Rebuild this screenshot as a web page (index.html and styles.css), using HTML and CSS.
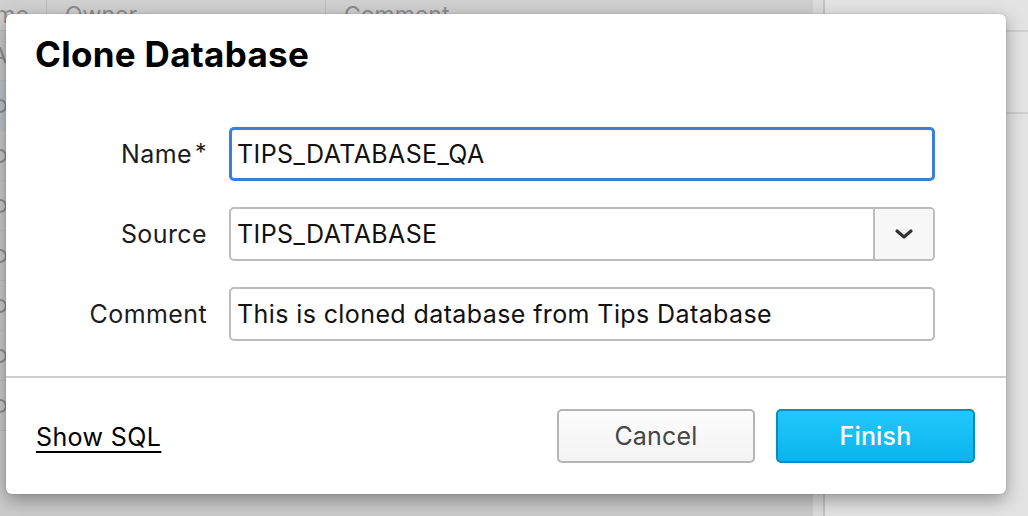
FILE: index.html
```html
<!DOCTYPE html>
<html>
<head>
<meta charset="utf-8">
<link rel="stylesheet" href="styles.css">
</head>
<body>
<div class="app">
  <div class="main">
    <div class="thead">
      <div class="th th-name">Name</div>
      <div class="th th-owner">Owner</div>
      <div class="th th-comment">Comment</div>
    </div>
    <div class="tbody">
      <div class="tr"><span class="cell">A</span></div>
      <div class="tr sel"><span class="dot"></span></div>
      <div class="tr"><span class="dot"></span></div>
      <div class="tr"><span class="dot"></span></div>
      <div class="tr"><span class="dot"></span></div>
      <div class="tr"><span class="dot"></span></div>
      <div class="tr"><span class="dot"></span></div>
      <div class="tr"><span class="dot"></span></div>
    </div>
  </div>
  <div class="splitter"></div>
  <div class="side">
    <div class="side-row"></div>
    <div class="side-row tall"></div>
  </div>
</div>

<div class="dialog">
  <h1 class="title">Clone Database</h1>
  <div class="form">
    <label class="label">Name<span class="req">*</span></label>
    <div class="field focus">TIPS_DATABASE_QA</div>

    <label class="label">Source</label>
    <div class="field select">
      <span class="select-value">TIPS_DATABASE</span>
      <span class="select-btn">
        <svg width="20" height="14" viewBox="0 0 20 14"><path d="M3 4 L10 10 L17 4" fill="none" stroke="#333" stroke-width="3.2" stroke-linecap="round" stroke-linejoin="round"/></svg>
      </span>
    </div>

    <label class="label">Comment</label>
    <div class="field">This is cloned database from Tips Database</div>
  </div>
  <div class="footer">
    <a class="link">Show SQL</a>
    <div class="buttons">
      <button class="btn cancel">Cancel</button>
      <button class="btn finish">Finish</button>
    </div>
  </div>
</div>
</body>
</html>
```
FILE: styles.css
```css
html, body {
  margin: 0;
  padding: 0;
}
body {
  width: 1028px;
  height: 516px;
  overflow: hidden;
  position: relative;
  font-family: Inter, "Noto Sans", sans-serif;
  background: #e1e1e1;
}

/* background app (dimmed) */
.app {
  display: flex;
  height: 516px;
}
.main {
  width: 813px;
  background: #cbcbcb;
  overflow: hidden;
}
.thead {
  display: flex;
  height: 30px;
  background: #d0d0d0;
  border-bottom: 1px solid #bdbdbd;
}
.th {
  font-size: 23px;
  color: #8c8c8c;
  line-height: 30px;
  box-sizing: border-box;
  border-right: 1px solid #bcbcbc;
  white-space: nowrap;
}
.th-name {
  width: 47px;
  text-indent: -35px;
  overflow: hidden;
}
.th-owner {
  width: 279px;
  padding-left: 18px;
}
.th-comment {
  flex: 1;
  padding-left: 18px;
  border-right: none;
}
.tbody {
  display: flex;
  flex-direction: column;
}
.tr {
  height: 49px;
  border-bottom: 1px solid #bdbdbd;
  background: #c9c9c9;
}
.tr.sel {
  background: #bcc3c8;
}
.cell {
  font-size: 22px;
  color: #8a8a8a;
  line-height: 49px;
  margin-left: -8px;
}
.dot {
  display: block;
  margin: 18px 0 0 -7px;
  width: 10px;
  height: 10px;
  border: 2px solid #8e8e8e;
  border-radius: 50%;
}
.splitter {
  width: 10px;
  background: #dcdcdc;
  border-right: 2px solid #c2c2c2;
}
.side {
  flex: 1;
  background: #e3e3e3;
}
.side-row {
  height: 30px;
  border-bottom: 2px solid #cfcfcf;
}
.side-row.tall {
  height: 80px;
}

/* dialog */
.dialog {
  position: absolute;
  left: 6px;
  top: 14px;
  width: 1000px;
  height: 480px;
  background: #fff;
  border-radius: 6px;
  box-shadow: 0 6px 18px rgba(0, 0, 0, 0.35), 0 0 2px rgba(0, 0, 0, 0.2);
  display: flex;
  flex-direction: column;
}
.title {
  margin: 0;
  padding: 20px 0 0 29px;
  font-size: 35px;
  line-height: 40px;
  font-weight: 700;
  color: #000;
  letter-spacing: 0.3px;
}
.form {
  display: grid;
  grid-template-columns: 1fr 706px;
  column-gap: 22px;
  row-gap: 26px;
  padding: 53px 71px 0 0;
  align-items: center;
}
.label {
  text-align: right;
  font-size: 25px;
  letter-spacing: 0.4px;
  color: #1c1c1c;
}
.req {
  margin-left: 3px;
  font-size: 23px;
  position: relative;
  top: -3px;
}
.field {
  height: 54px;
  box-sizing: border-box;
  border: 2px solid #bcbcbc;
  border-radius: 5px;
  padding: 0 6px;
  font-size: 25px;
  letter-spacing: 0.4px;
  line-height: 50px;
  color: #111;
  white-space: nowrap;
}
.field.focus {
  border: 3px solid #3a80d6;
  padding-left: 5px;
  line-height: 48px;
}
.field.select {
  display: flex;
  padding: 0;
}
.select-value {
  flex: 1;
  padding-left: 6px;
}
.select-btn {
  width: 58px;
  border-left: 2px solid #bcbcbc;
  background: #f7f7f7;
  border-radius: 0 3px 3px 0;
  display: flex;
  align-items: center;
  justify-content: center;
}
.footer {
  margin-top: 35px;
  border-top: 2px solid #cdcdcd;
  display: flex;
  align-items: center;
  justify-content: space-between;
  padding: 31px 31px 0 30px;
}
.link {
  font-size: 25px;
  letter-spacing: 0.4px;
  color: #000;
  text-decoration: underline;
  text-decoration-thickness: 2px;
  text-underline-offset: 5px;
  margin-top: 2px;
}
.buttons {
  display: flex;
  gap: 21px;
}
.btn {
  width: 198px;
  height: 54px;
  box-sizing: border-box;
  border-radius: 5px;
  font-family: Inter, "Noto Sans", sans-serif;
  font-size: 25px;
  letter-spacing: 0.2px;
  padding: 0;
}
.cancel {
  border: 2px solid #b4b4b4;
  background: linear-gradient(#fcfcfc, #f3f3f3);
  color: #454545;
}
.finish {
  width: 199px;
  border: 2px solid #0a8bbd;
  background: linear-gradient(#21c8fc, #0bb4ee);
  color: #fff;
  font-weight: 500;
}
```
